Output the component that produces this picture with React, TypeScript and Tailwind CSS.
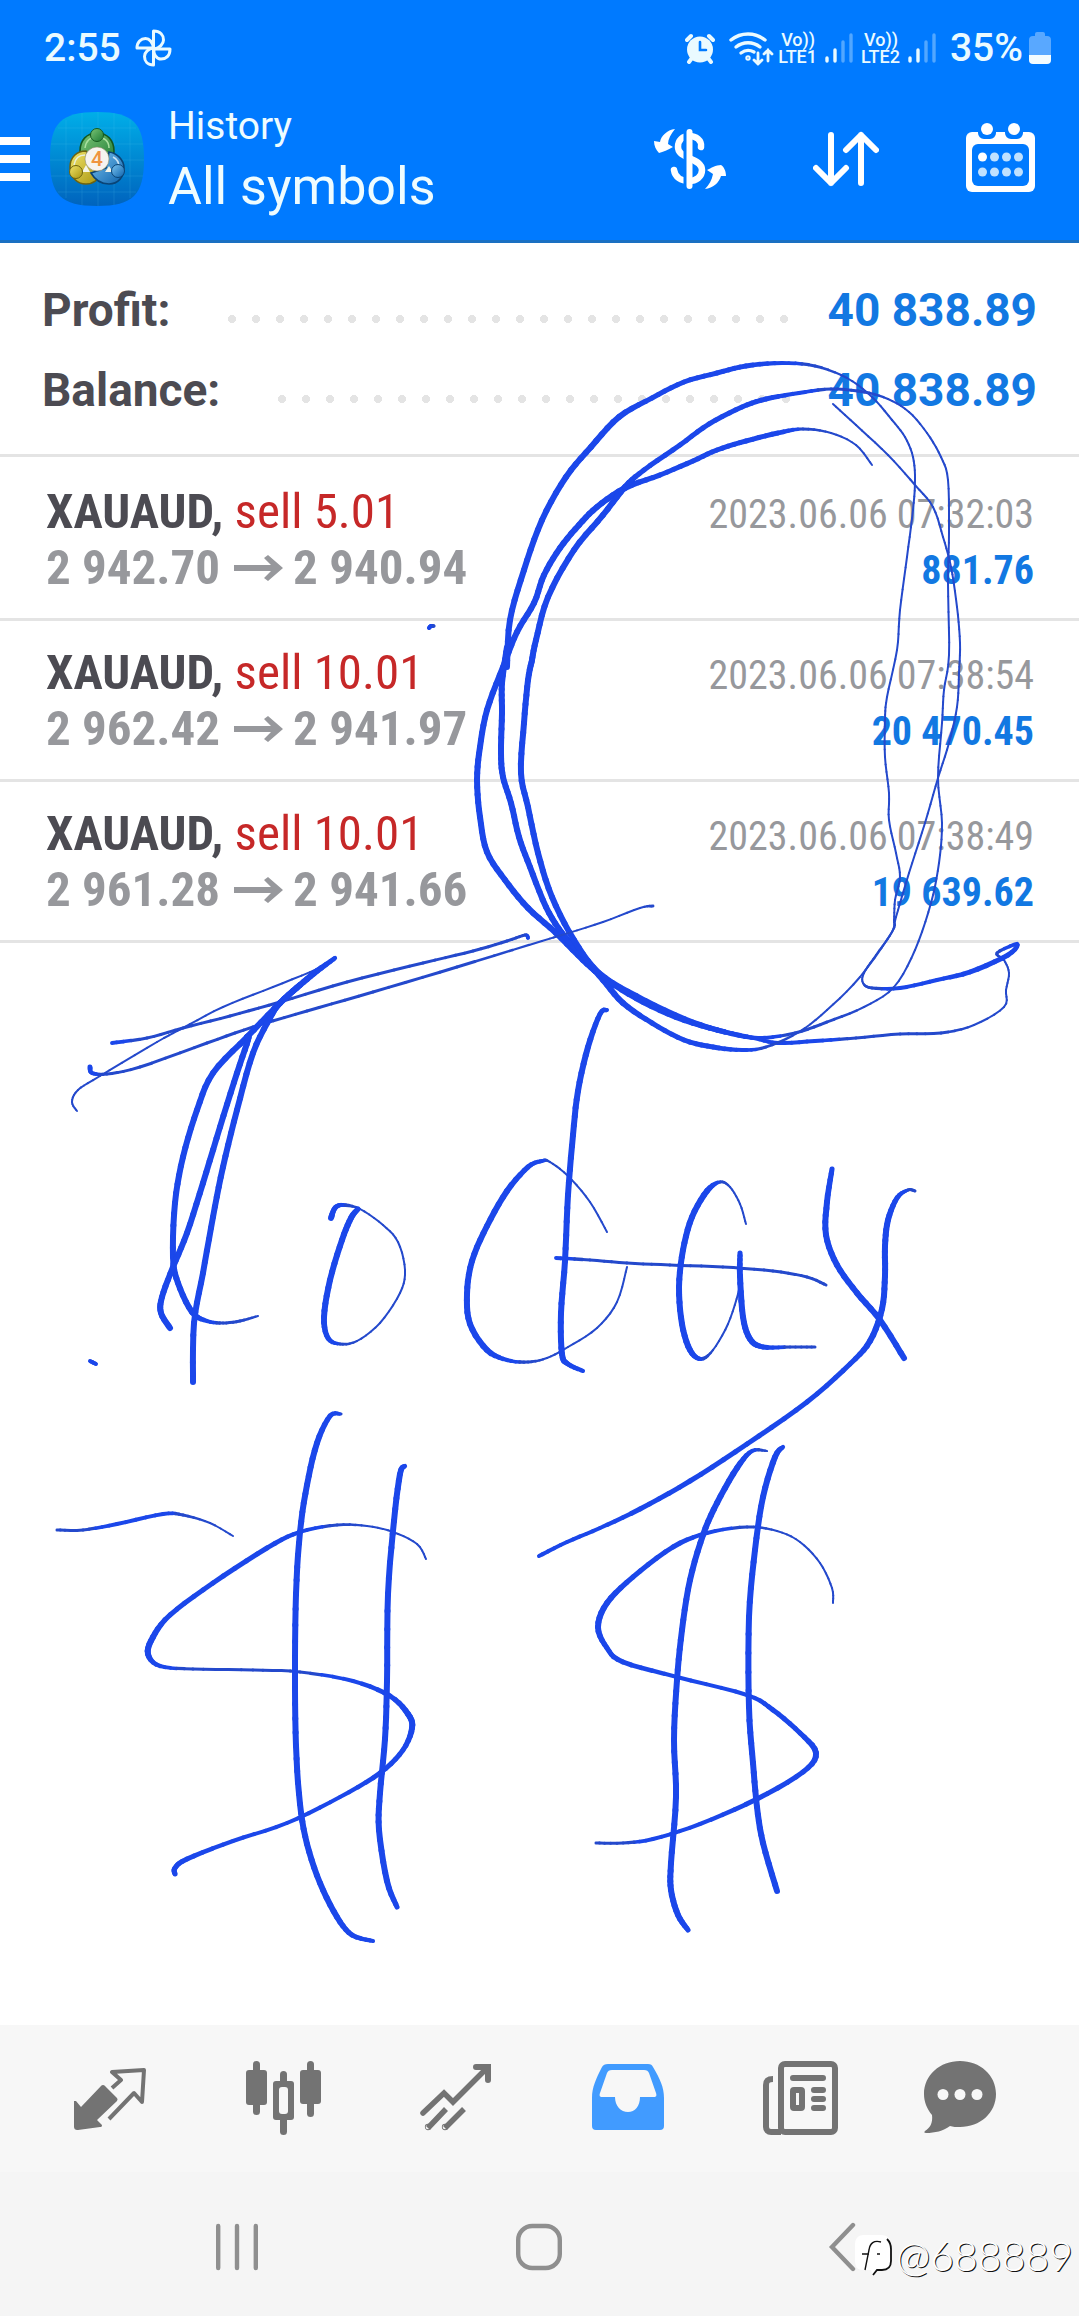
import type { ReactNode } from "react";

type Deal = {
  symbol: string;
  volume: string;
  open: string;
  close: string;
  time: string;
  profit: string;
};

const deals: Deal[] = [
  { symbol: "XAUAUD", volume: "5.01", open: "2 942.70", close: "2 940.94", time: "2023.06.06 07:32:03", profit: "881.76" },
  { symbol: "XAUAUD", volume: "10.01", open: "2 962.42", close: "2 941.97", time: "2023.06.06 07:38:54", profit: "20 470.45" },
  { symbol: "XAUAUD", volume: "10.01", open: "2 961.28", close: "2 941.66", time: "2023.06.06 07:38:49", profit: "19 639.62" },
];

// Pen strokes: "x,y,width" points, the width carries over when it is left out
const strokes = [
  // circle around the dates
  "872,465,2 856,445 831,433,2 803,429,3 778,433,5 746,441 717,450 693,461 660,475 625,488,6 597,507 579,525 560,548 544,575 534,603 517,632 503,667 487,710 480,747 477,780,6 480,817 487,852 505,880 528,908 556,933 583,960 603,977 636,998 676,1017,6 717,1030,5 754,1038,4 778,1043,4 815,1041,4 856,1038,3 900,1034,3 941,1033,3 974,1025,2 1004,1007 1006,990 1009,973 1004,960 997,953,3 1017,944,4 1008,955,5 970,972,5 937,980,4 900,988,4 872,988,3 863,983,2 864,973 876,955 892,932 896,917 909,873 925,823 938,778 949,743 957,707 959,673 960,643 957,607 951,567 943,537 933,507 915,485 888,455 856,425 833,404",
  "507,667,6 510,620 524,570 542,520 566,477 591,447 619,417,6 652,398,5 684,382 717,373 746,366,5 782,363,4 815,366,3 847,378,2 872,397 892,420 905,437 913,457 915,480 913,510 907,557 900,610 897,650 887,697 885,720 885,757 889,793 889,820 896,853 900,877 895,900 894,920 892,932 860,977 827,1010 799,1032 766,1047,3 742,1050,4 713,1047,5 684,1040,5 652,1023,5 623,1003,6 603,980 583,957 562,933 546,907 530,867 519,837 511,803 503,777 501,753 502,713 502,683 507,647",
  "532,660,6 536,640 548,597 574,550 603,515 625,487 644,470,5 680,445 709,424 742,407 766,399,5 799,393,4 831,389,3 864,392,3 888,399,2 909,412 927,433 941,457 948,480 949,533 948,583 949,655 944,690 942,723 938,778 942,823 939,863 931,903 915,950 894,987 864,1007 827,1022,3 795,1033,3 758,1038,4 725,1032,5 684,1019,6 636,996 599,973 574,940 552,897 538,853 528,807 521,773 524,723 528,680 532,660",
  // T
  "112,1043,4 147,1038,3 183,1028 230,1016 280,1002 347,982 423,963 473,951 507,941 525,935 528,938,4",
  "90,1067,5 92,1073,4 107,1074,3 140,1067 207,1043 253,1027 307,1011 373,992 457,967 542,941,2 562,935 603,922 640,908 653,906,3",
  "77,1111,2 72,1102 78,1090 100,1076 157,1042 183,1028 223,1007 273,987 317,969,2 335,958,4 317,971,6 300,985 280,1003 247,1037 213,1073 197,1110 183,1157 175,1203 173,1257 178,1283 192,1312,6 207,1321,4 223,1323,3 240,1321,3 258,1316,2",
  "170,1328,6 161,1313 162,1297 173,1267 187,1233 203,1183 220,1127 237,1073 248,1040 247,1037",
  "193,1382,6 194,1323 203,1273 213,1217 223,1167 237,1110 253,1053 270,1018 280,1003 300,985",
  // o
  "331,1218,6 335,1208,5 343,1205,4 360,1209,2 383,1225 398,1242 405,1270 400,1293 380,1323 357,1341 340,1344,3 328,1338,5 324,1317,6 330,1280 342,1240 351,1218 358,1209,5",
  // d
  "607,1232,2 590,1202 568,1176 550,1162 542,1161,4 528,1167,5 507,1191,6 487,1226 472,1261 467,1294 470,1324 487,1350,6 507,1360,4 528,1362,3 547,1358,2 568,1347 597,1328 617,1302 627,1267",
  "607,1010,4 600,1014,5 588,1047,6 578,1091 573,1135 568,1195 565,1261 561,1313 562,1354 568,1364,5 583,1371,4",
  "556,1258,4 590,1260,3 627,1263 670,1265 723,1267 773,1271 807,1277 826,1285",
  // a
  "746,1224,2 740,1204 730,1187,2 720,1182,3 707,1191,6 692,1217 683,1250 679,1287 682,1324 690,1350 701,1359,4 713,1350,2 728,1324 738,1294 740,1280",
  "740,1253,5 740,1276,6 743,1317 750,1339,6 763,1347,5 790,1347,3 815,1347,3",
  // y
  "832,1169,5 827,1202,6 826,1235 837,1265 857,1293 880,1320 904,1358",
  "915,1191,3 908,1190,3 897,1198,5 888,1220,6 885,1246 885,1276 882,1309 870,1341,6 850,1364,5 807,1402 747,1444 690,1481 640,1509 600,1528,4 567,1542 539,1556",
  // left dollar sign
  "57,1530,3 83,1530 117,1524,4 163,1514,4 183,1515,3 210,1523,2 233,1536",
  "426,1559,2 417,1544 393,1532 367,1526 337,1525,3 300,1532,4 267,1548,5 213,1583 170,1615 153,1637,6 148,1654,6 160,1666,4 193,1669,3 253,1670 300,1672 353,1681,4 390,1696,5 408,1714,6 412,1728 403,1750,5 380,1773 340,1797,4 287,1823 233,1841 187,1859,5 175,1868 175,1874",
  "341,1414,3 330,1416,5 317,1443,6 307,1485 300,1532 296,1594 295,1674 296,1746 300,1804 307,1844 320,1883 337,1917,6 352,1935,5 373,1941,4",
  "405,1466,4 400,1474,6 394,1521 388,1594 387,1681 385,1739 380,1793 379,1830 387,1881 397,1907,5",
  // right dollar sign
  "833,1603,2 832,1588 820,1563 800,1542 777,1531 747,1527,3 707,1533,4 673,1547,5 633,1577 607,1603,6 598,1627 607,1648,5 623,1662,5 677,1677,4 747,1695,4 773,1710,5 800,1733,5 816,1753,6 803,1772,5 757,1799 700,1824,4 653,1839 623,1843,3 596,1843,3",
  "767,1451,2 752,1451,4 737,1468,6 717,1503 703,1535 690,1580 682,1630 677,1680 674,1740 676,1797 671,1863 671,1890 678,1915 688,1930,5",
  "783,1447,4 775,1457,6 763,1497 755,1550 749,1617 749,1707 753,1763 757,1807 763,1843 777,1891",
  // stray dots
  "90,1361,4 96,1364",
  "429,628,4 431,626 434,626,3",
];

type Point = [number, number, number];

function parseStroke(text: string): Point[] {
  let width = 6;
  return text.split(" ").map((item) => {
    const [x, y, w] = item.split(",").map(Number);
    width = w ?? width;
    return [x, y, width];
  });
}

// Catmull-Rom curve cut into short lines, so the width can change along the way
function Stroke({ text }: { text: string }) {
  const pts = parseStroke(text);
  const pieces: ReactNode[] = [];
  const steps = 5;
  for (let i = 0; i < pts.length - 1; i++) {
    const p0 = pts[Math.max(i - 1, 0)];
    const p1 = pts[i];
    const p2 = pts[i + 1];
    const p3 = pts[Math.min(i + 2, pts.length - 1)];
    const at = (t: number, k: number) =>
      0.5 *
      (2 * p1[k] +
        (p2[k] - p0[k]) * t +
        (2 * p0[k] - 5 * p1[k] + 4 * p2[k] - p3[k]) * t * t +
        (3 * p1[k] - p0[k] - 3 * p2[k] + p3[k]) * t * t * t);
    for (let s = 0; s < steps; s++) {
      const a = s / steps;
      const b = (s + 1) / steps;
      const w = p1[2] + (p2[2] - p1[2]) * ((a + b) / 2);
      pieces.push(
        <line
          key={`${i}-${s}`}
          x1={at(a, 0).toFixed(1)}
          y1={at(a, 1).toFixed(1)}
          x2={at(b, 0).toFixed(1)}
          y2={at(b, 1).toFixed(1)}
          strokeWidth={w}
          stroke={w < 3.5 ? "#2449cc" : "#1b47ea"}
        />
      );
    }
  }
  return <g>{pieces}</g>;
}

function Ink() {
  return (
    <svg
      viewBox="0 0 1079 2316"
      className="pointer-events-none absolute inset-x-0 top-0 w-full"
      fill="none"
      strokeLinecap="round"
      aria-hidden="true"
    >
      {strokes.map((text) => (
        <Stroke key={text} text={text} />
      ))}
    </svg>
  );
}

function Signal() {
  return (
    <svg width="28" height="32" viewBox="0 0 28 32" stroke="#eafaff" strokeWidth="3.4" strokeLinecap="round">
      <path d="M2 26v3M10 18v11" />
      <path d="M18 10v19M26 3v26" opacity=".35" />
    </svg>
  );
}

function Volte({ sim }: { sim: string }) {
  return (
    <div className="flex flex-col text-[18px] leading-[17px] font-medium">
      <span className="pl-[3px]">Vo))</span>
      <span>LTE{sim}</span>
    </div>
  );
}

function StatusBar() {
  return (
    <div className="flex h-24 items-center justify-between pr-7 pl-11 text-[#eafaff]">
      <div className="flex items-center gap-3.5">
        <span className="text-[39px] leading-[48px] font-medium">2:55</span>
        <svg width="37" height="38" viewBox="0 0 37 38" fill="none" stroke="#eafaff" strokeWidth="3" strokeLinejoin="round">
          <path d="M18.500 20V2c7 0 10 4.500 10 9 0 4-4 8-9 9" />
          <path d="M18 20h17c0 7-4 10-9 10-4 0-7-4-7.500-10" />
          <path d="M18.500 19v17c-6 0-9-4-9-8.500 0-4 4-8 9-8.500" />
          <path d="M18.500 19H2c0-6 4-9.500 8.500-9.500 4 0 7.500 4 8 9.500" />
        </svg>
      </div>
      <div className="flex items-center">
        <svg width="30" height="32" viewBox="0 0 30 32" fill="#eafaff">
          <circle cx="15" cy="17.500" r="13" />
          <path d="M2 8l4-4M28 8l-4-4M4 30l3-4M26 30l-3-4" stroke="#eafaff" strokeWidth="4" strokeLinecap="round" />
          <path d="M15 10v8h6" fill="none" stroke="#007aff" strokeWidth="2.600" strokeLinecap="round" />
        </svg>
        <svg className="ml-3.5" width="45" height="36" viewBox="0 0 45 36" fill="none" stroke="#eafaff" strokeWidth="3.400" strokeLinecap="round">
          <path d="M2 10a27 27 0 0 1 34 0" />
          <path d="M7 17a19 19 0 0 1 24 0" />
          <path d="M12 23a12 12 0 0 1 13-1" />
          <circle cx="19" cy="28" r="1" />
          <path d="M29 23v11M25 30l4 4 4-4M39 31V20M35 24l4-4 4 4" strokeWidth="2.800" />
        </svg>
        <div className="ml-1">
          <Volte sim="1" />
        </div>
        <div className="ml-2">
          <Signal />
        </div>
        <div className="ml-2">
          <Volte sim="2" />
        </div>
        <div className="ml-2">
          <Signal />
        </div>
        <span className="ml-3.5 text-[39px] leading-[48px] font-medium">35%</span>
        <svg className="ml-1.5" width="22" height="32" viewBox="0 0 22 32">
          <path d="M6 2a2 2 0 0 1 2-2h6a2 2 0 0 1 2 2v2h2a4 4 0 0 1 4 4v15H0V8a4 4 0 0 1 4-4h2z" fill="#59a8ff" />
          <path d="M0 23h22v5a4 4 0 0 1-4 4H4a4 4 0 0 1-4-4z" fill="#f4fcff" />
        </svg>
      </div>
    </div>
  );
}

function AppLogo() {
  return (
    <svg width="94" height="94" viewBox="0 0 94 94">
      <defs>
        <linearGradient id="tile" x1="0" y1="0" x2="0" y2="1">
          <stop offset="0" stopColor="#00aee8" />
          <stop offset="1" stopColor="#0063bd" />
        </linearGradient>
        <linearGradient id="green" x1="0" y1="0" x2="1" y2="1">
          <stop offset="0" stopColor="#7cc576" />
          <stop offset="1" stopColor="#1c7a34" />
        </linearGradient>
        <linearGradient id="gold" x1="0" y1="0" x2="1" y2="1">
          <stop offset="0" stopColor="#f2e56a" />
          <stop offset="1" stopColor="#a8940f" />
        </linearGradient>
        <linearGradient id="sky" x1="0" y1="0" x2="1" y2="1">
          <stop offset="0" stopColor="#7cc4f0" />
          <stop offset="1" stopColor="#0c62ac" />
        </linearGradient>
      </defs>
      <path d="M47 0c36 0 47 11 47 47S83 94 47 94 0 83 0 47 11 0 47 0z" fill="url(#tile)" />
      <path
        d="M16 8v78M32 1v92M48 0v94M64 1v92M80 8v78M8 16h78M1 32h92M0 48h94M1 64h92M8 80h78"
        stroke="#5cc8f0"
        strokeOpacity=".16"
      />
      {/* three shoulders around the badge, a head on each */}
      <g strokeWidth="1.600">
        <path d="M30 39c0-11 7-18 17-18s17 7 17 18c0 8-3 14-8 16L34 50c-3-3-4-7-4-11z" fill="url(#green)" stroke="#14591f" />
        <path d="M20 55c0-10 7-16 16-16l14 22c-1 7-7 11-14 11-9 0-16-7-16-17z" fill="url(#gold)" stroke="#6d6310" />
        <path d="M59 40c8 1 15 8 15 16 0 9-6 16-15 16-8 0-14-4-18-11l15-5z" fill="url(#sky)" stroke="#0a4476" />
      </g>
      <path d="M35 36c1-7 5-11 12-11s12 4 12 11" fill="none" stroke="#a9e0a0" strokeWidth="1.500" />
      <path d="M24 53c1-6 5-10 11-10M63 45c4 2 6 6 6 10" fill="none" stroke="#e8f6ff" strokeWidth="1.500" opacity=".8" />
      <path d="M32 60l4-7 4 7zM55 60l4-6 4 6z" fill="#f4f4e8" />
      <circle cx="47" cy="23" r="6.500" fill="url(#green)" stroke="#14591f" />
      <circle cx="26" cy="60" r="6.500" fill="url(#gold)" stroke="#6d6310" />
      <circle cx="68" cy="59" r="6.500" fill="url(#sky)" stroke="#0a4476" />
      <circle cx="47" cy="47" r="12" fill="#f6f3f0" stroke="#8a8a6a" strokeWidth=".6" />
      <text x="47" y="54" textAnchor="middle" fontSize="21" fontWeight="500" fill="#ef9440" fontFamily="Roboto, sans-serif">
        4
      </text>
    </svg>
  );
}

function Header() {
  return (
    <header className="border-b-[3px] border-[#1a70c2] bg-[#007aff] text-[#eefcff]">
      <StatusBar />
      <div className="mb-[18px] flex h-[126px] items-center pr-11">
        <button type="button" aria-label="Menu" className="flex flex-col gap-[10px]">
          <span className="h-2 w-[30px] bg-white" />
          <span className="h-2 w-[30px] bg-white" />
          <span className="h-2 w-[30px] bg-white" />
        </button>
        <div className="ml-5">
          <AppLogo />
        </div>
        <div className="ml-6 flex-1">
          <p className="text-[39px] leading-[56px]">History</p>
          <h1 className="text-[52px] leading-[66px]">All symbols</h1>
        </div>
        <div className="flex items-center gap-[87px]">
          <button type="button" aria-label="Filter by symbol">
            <svg width="72" height="62" viewBox="0 0 72 62">
              <path
                d="M47 19c1-7-5-11-12-11-6 0-11 4-11 11 0 6 5 8 11 11 7 3 13 6 13 12 0 7-6 11-13 11-8 0-14-4-15-11"
                fill="none"
                stroke="#fff"
                strokeWidth="6.500"
                strokeLinecap="round"
              />
              <path d="M33.500 3v56" stroke="#007aff" strokeWidth="8" />
              <path d="M35.500 4v54" stroke="#fff" strokeWidth="6" strokeLinecap="round" />
              <path d="M21 1c-8 1-14 7-15 13l-6-1c0 5 2 9 5 12 4-1 9-3 14-6l-5-3c0-5 3-10 7-15z" fill="#fff" />
              <path d="M51 61c8-1 14-6 16-13h5c0-5-2-9-5-11-5 0-10 3-14 5l6 4c-1 6-4 11-8 15z" fill="#fff" />
            </svg>
          </button>
          <button type="button" aria-label="Sort">
            <svg width="66" height="56" viewBox="0 0 66 56" fill="none" stroke="#fff" strokeWidth="6" strokeLinecap="round" strokeLinejoin="round">
              <path d="M18 4v48M3 37l15 15 15-15" />
              <path d="M48 52V4M33 19L48 4l15 15" />
            </svg>
          </button>
          <button type="button" aria-label="Period">
            <svg width="69" height="72" viewBox="0 0 69 72">
              <rect y="9" width="69" height="60" rx="6" fill="#fff" />
              <path d="M12 6v4a6 6 0 0 0 6 6h6a6 6 0 0 0 6-6V6zM39 6v4a6 6 0 0 0 6 6h6a6 6 0 0 0 6-6V6z" fill="#007aff" />
              <circle cx="21" cy="6" r="6" fill="#fff" />
              <circle cx="48" cy="6" r="6" fill="#fff" />
              <rect x="6" y="21" width="57" height="42" rx="6" fill="#007aff" />
              <g fill="#bfe1ff">
                <circle cx="16.500" cy="34" r="4.500" fill="#fff" />
                <circle cx="28.500" cy="34" r="4.500" />
                <circle cx="40.500" cy="34" r="4.500" />
                <circle cx="52.500" cy="34" r="4.500" />
                <circle cx="16.500" cy="49" r="4.500" />
                <circle cx="28.500" cy="49" r="4.500" />
                <circle cx="40.500" cy="49" r="4.500" />
                <circle cx="52.500" cy="49" r="4.500" />
              </g>
            </svg>
          </button>
        </div>
      </div>
    </header>
  );
}

function SummaryRow({ label, value }: { label: string; value: string }) {
  return (
    <div className="flex h-20 items-center text-[46px] leading-[80px] font-bold">
      <dt className="text-[#4c4b52]">{label}</dt>
      <span className="mt-[18px] mr-[30px] ml-[50px] h-2 flex-1 bg-[radial-gradient(circle,#e4e4e4_4px,transparent_4px)] bg-[length:24px_8px] bg-repeat-x" />
      <dd className="text-[#1278e2]">{value}</dd>
    </div>
  );
}

function DealRow({ deal }: { deal: Deal }) {
  return (
    <li className="border-b-[3px] border-[#e4e4e4] pt-6 pr-[45px] pb-[22px] pl-[46px]">
      <div className="flex h-14 items-baseline justify-between">
        <p className="text-[49px] leading-[56px]">
          <span className="font-bold text-[#4c4b52]">{deal.symbol},</span>{" "}
          <span className="text-[#c62828]">sell {deal.volume}</span>
        </p>
        <time className="text-[40px] leading-[48px] text-[#97989c]">{deal.time}</time>
      </div>
      <div className="flex h-14 items-baseline justify-between font-bold">
        <p className="flex items-center text-[49px] leading-[56px] text-[#97989c]">
          {deal.open}
          <svg className="mr-2.5 ml-3.5" width="49" height="26" viewBox="0 0 49 26" fill="#97989c" aria-label="to">
            <path d="M0 10h37l-7-7 4-3 15 13-15 13-4-3 7-7H0z" />
          </svg>
          {deal.close}
        </p>
        <span className="text-[40px] leading-[48px] text-[#1278e2]">{deal.profit}</span>
      </div>
    </li>
  );
}

function Tabs() {
  return (
    <nav className="grid h-[147px] grid-cols-[repeat(5,172fr)_144fr] justify-items-center bg-[#f7f7f7] pt-9 pr-[47px] pb-[37px] pl-6 text-[#737373]">
      <button type="button" aria-label="Trade">
        <svg width="72" height="74" viewBox="0 0 72 74" fill="currentColor">
          <path d="M0 40l2 0 5 6 20-21a2.500 2.500 0 0 1 4 0l12 12a2.500 2.500 0 0 1 0 3L23 59l5 5c0 2-1 2-2 2L4 69c-3 0-4-1-4-4z" />
          <path d="M38 27l9-8-9-8 32-2-2 32-8-9-25 26" fill="none" stroke="currentColor" strokeWidth="4" strokeLinejoin="round" />
        </svg>
      </button>
      <button type="button" aria-label="Quotes">
        <svg width="75" height="74" viewBox="0 0 75 74" fill="currentColor">
          <rect x="7" width="7" height="54" rx="3.500" />
          <rect y="9" width="21" height="35" rx="3" />
          <rect x="61" width="7" height="56" rx="3.500" />
          <rect x="54" y="9" width="21" height="34" rx="3" />
          <rect x="34" y="10" width="7" height="64" rx="3.500" />
          <rect x="27" y="20" width="21" height="39" rx="3" />
          <rect x="33" y="26" width="9" height="27" rx="3" fill="#f7f7f7" />
        </svg>
      </button>
      <button type="button" aria-label="Chart">
        <svg width="71" height="74" viewBox="0 0 71 74" fill="none" stroke="currentColor" strokeWidth="5.500">
          <path d="M3 52l21-20 9 9L67 7" strokeLinecap="round" />
          <path d="M56 6h12v13" strokeWidth="6" strokeLinecap="round" />
          <path d="M8 67l18-19M25 67l19-19" />
          <circle cx="8" cy="66" r=".4" />
          <circle cx="25" cy="66" r=".4" />
        </svg>
      </button>
      <button type="button" aria-label="History" aria-current="page" className="text-[#419bff]">
        <svg width="72" height="74" viewBox="0 0 72 74" fill="currentColor">
          <path
            fillRule="evenodd"
            d="M16 3h40c3 0 4 1 5 3 7 12 11 20 11 31v28a4 4 0 0 1-4 4H4a4 4 0 0 1-4-4V37C0 26 4 18 10 6c1-2 3-3 6-3zM20 9c-3 0-4 1-5 3L8 32c-1 3 0 4 2 4h13c0 9 6 15 13 15s12-6 12-15h14c2 0 3-1 2-4l-7-20c-1-2-2-3-5-3z"
          />
        </svg>
      </button>
      <button type="button" aria-label="News">
        <svg width="76" height="74" viewBox="0 0 76 74" fill="none" stroke="currentColor" strokeWidth="6">
          <rect x="18" y="3" width="54" height="68" rx="4" />
          <path d="M10 18c-5 0-7 2-7 6v42c0 3 2 5 5 5h10" />
          <path d="M30 17h30M51 29h9M51 38h9M51 47h9" strokeLinecap="round" />
          <rect x="30" y="29" width="9" height="18" rx="1" />
        </svg>
      </button>
      <button type="button" aria-label="Messages">
        <svg width="72" height="74" viewBox="0 0 72 74" fill="currentColor">
          <path d="M36 0c20 0 36 14 36 33S56 66 36 66c-4 0-7 0-10-1-7 5-15 7-24 7-2 0-2-1-1-2 5-3 8-8 7-16C3 48 0 41 0 33 0 14 16 0 36 0z" />
          <g fill="#f7f7f7">
            <circle cx="19" cy="33.500" r="5.500" />
            <circle cx="36" cy="33.500" r="5.500" />
            <circle cx="53" cy="33.500" r="5.500" />
          </g>
        </svg>
      </button>
    </nav>
  );
}

function SystemNav() {
  return (
    <div className="grid h-36 grid-cols-3 place-items-center bg-[#f5f5f5] px-[86px] pt-1.5 text-[#8f8f8f]">
      <button type="button" aria-label="Recent apps">
        <svg width="42" height="48" viewBox="0 0 42 48" stroke="currentColor" strokeWidth="4.400" strokeLinecap="round">
          <path d="M2.200 3v42M21 3v42M39.800 3v42" />
        </svg>
      </button>
      <button type="button" aria-label="Home">
        <svg width="46" height="48" viewBox="0 0 46 48" fill="none" stroke="currentColor" strokeWidth="4.400">
          <rect x="2.200" y="3" width="41.600" height="42" rx="14" />
        </svg>
      </button>
      <button type="button" aria-label="Back">
        <svg width="28" height="50" viewBox="0 0 28 50" fill="none" stroke="currentColor" strokeWidth="4.400" strokeLinecap="round">
          <path d="M25 3L4 25l21 22" />
        </svg>
      </button>
    </div>
  );
}

function Watermark() {
  return (
    <div className="absolute right-1.5 bottom-9 flex items-center gap-1 text-white">
      <svg width="38" height="44" viewBox="0 0 38 44">
        <path d="M10 1h17c7 0 10 4 10 11v14c0 7-3 10-10 10h-4l-4 6-2-6h-7C3 36 1 33 1 26V12C1 5 3 1 10 1z" fill="#fff" />
        <path d="M33 5c3 3 4 6 4 10v12c0 6-3 9-9 9h-5l-4 5" fill="none" stroke="#111" strokeWidth="1.800" />
        <path d="M27 8c-7-2-11 1-12 8l-4 20M8 20h7M23 20h3" fill="none" stroke="#111" strokeWidth="1.400" />
      </svg>
      <span className="font-['Lato'] text-[41px] leading-[48px] font-light [text-shadow:1px_1px_0_#111]">@688889</span>
    </div>
  );
}

export default function App() {
  return (
    <div className="relative flex min-h-screen flex-col bg-white font-['Roboto',sans-serif]">
      <Header />
      <main className="flex-1">
        <dl className="border-b-[3px] border-[#e4e4e4] pt-[27px] pr-[42px] pb-6 pl-[42px]">
          <SummaryRow label="Profit:" value="40 838.89" />
          <SummaryRow label="Balance:" value="40 838.89" />
        </dl>
        <ul className="pt-[3px] font-['Roboto_Condensed','Roboto',sans-serif]">
          {deals.map((deal) => (
            <DealRow key={deal.time} deal={deal} />
          ))}
        </ul>
      </main>
      <Tabs />
      <SystemNav />
      <Ink />
      <Watermark />
    </div>
  );
}
